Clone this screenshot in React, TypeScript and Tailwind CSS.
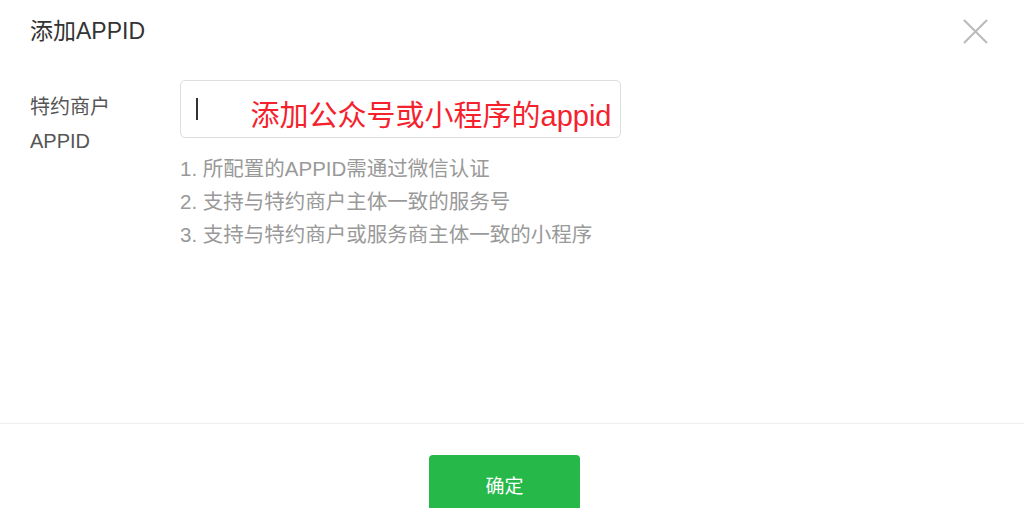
export default function App() {
  const font = { fontFamily: '"Liberation Sans", "Noto Sans CJK SC", sans-serif' };
  return (
    <div className="w-[1024px] h-[508px] bg-white flex flex-col overflow-hidden" style={font}>
      <div className="h-[62px] flex items-center justify-between pl-[30px] pr-[36px]">
        <span className="text-[23px] text-[#333]">添加APPID</span>
        <svg width="25" height="25" viewBox="0 0 26 26" className="text-[#bbb]">
          <path d="M1 1 L25 25 M25 1 L1 25" stroke="currentColor" strokeWidth="2.2" />
        </svg>
      </div>

      <div className="flex-1 flex pt-[18px] pl-[30px]">
        <div className="w-[150px] mt-[10px] text-[20px] leading-[34px] text-[#555]">
          <div>特约商户</div>
          <div>APPID</div>
        </div>
        <div className="w-[441px]">
          <div className="h-[58px] border border-[#ddd] rounded-[5px] flex items-center pl-[15px]">
            <span className="w-[1.5px] h-[22px] bg-[#333]" />
            <span className="ml-[53px] mt-[16px] text-[29px] text-[#f5222d]">添加公众号或小程序的appid</span>
          </div>
          <ol className="mt-[14px] text-[20.5px] leading-[33px] text-[#999]">
            <li>1. 所配置的APPID需通过微信认证</li>
            <li>2. 支持与特约商户主体一致的服务号</li>
            <li>3. 支持与特约商户或服务商主体一致的小程序</li>
          </ol>
        </div>
      </div>

      <div className="h-[85px] border-t border-[#eee] flex justify-center pt-[31px] pr-[15px]">
        <button className="w-[151px] h-[60px] rounded-[4px] bg-[#27b84a] text-white text-[19px] flex items-start justify-center pt-[18px]">
          确定
        </button>
      </div>
    </div>
  );
}
